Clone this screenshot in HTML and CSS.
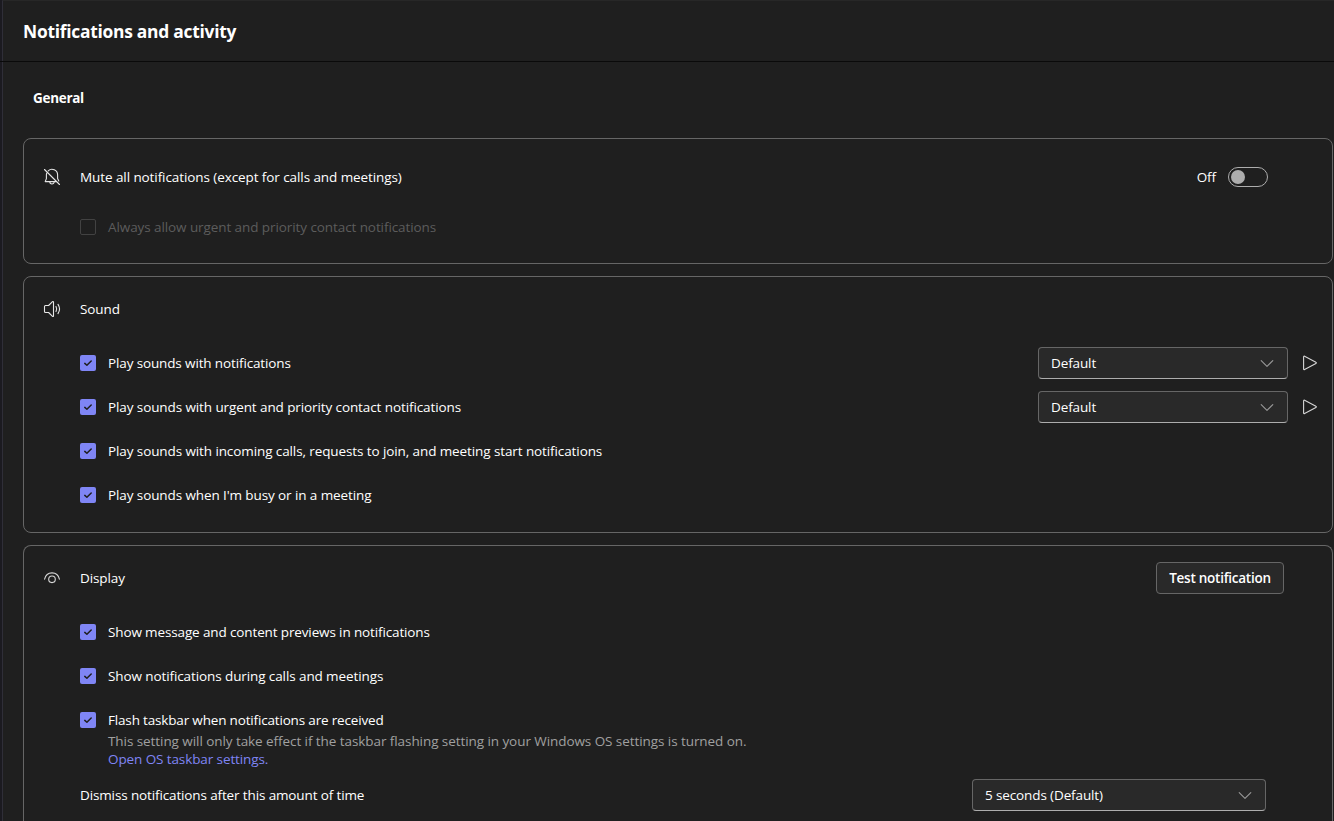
FILE: index.html
```html
<!DOCTYPE html>
<html lang="en">
<head>
<meta charset="utf-8">
<title>Notifications and activity</title>
<link rel="stylesheet" href="styles.css">
</head>
<body>
<svg class="defs" width="0" height="0" aria-hidden="true">
  <symbol id="check" viewBox="0 0 16 16"><path d="M4.8 8.4 6.9 10.3 11.2 6" fill="none" stroke="#1f1f1f" stroke-width="1.5" stroke-linecap="round" stroke-linejoin="round"/></symbol>
  <symbol id="chevron" viewBox="0 0 14 14"><path d="M1.2 4.6 7 10.4 12.8 4.6" fill="none" stroke="#999" stroke-width="1.1" stroke-linecap="round" stroke-linejoin="round"/></symbol>
  <symbol id="play" viewBox="0 0 16 16"><path d="M1.6 1.9c0-.6.5-.9 1-.7l11.3 6c.6.3.6 1 0 1.3l-11.3 6c-.5.3-1 0-1-.6z" fill="none" stroke="#d6d6d6" stroke-width="1.1" stroke-linejoin="round"/></symbol>
</svg>
<div class="pane">
  <header class="header"><h1 class="title">Notifications and activity</h1></header>
  <main class="content">
    <h2 class="section">General</h2>

    <section class="card mute">
      <div class="row head">
        <svg class="icon" viewBox="0 0 20 20" fill="none" stroke="#e6e6e6" stroke-width="1.1" stroke-linecap="round" stroke-linejoin="round"><path d="M2.5 2.5 17.5 17.5M6.2 3.8A5.6 5.6 0 0 1 15.6 8v3.6l1.2 2.4M4.7 6.2A6 6 0 0 0 4.4 8v3.6L3.2 14.6h11.4M7.8 14.8a2.2 2.2 0 0 0 4.4 0"/></svg>
        <span class="label">Mute all notifications (except for calls and meetings)</span>
        <span class="state">Off</span><span class="switch"><span class="knob"></span></span>
      </div>
      <div class="row option disabled"><span class="box"></span><span class="label">Always allow urgent and priority contact notifications</span></div>
    </section>

    <section class="card sound">
      <div class="row head">
        <svg class="icon" viewBox="0 0 20 20" fill="none" stroke="#e6e6e6" stroke-width="1.1" stroke-linecap="round" stroke-linejoin="round"><path d="M11.5 3.1v13.8c0 .6-.6.8-1 .4L6.6 13.5H3.5a1 1 0 0 1-1-1v-5a1 1 0 0 1 1-1h3.1l3.9-3.8c.4-.4 1-.2 1 .4zM14 7.6a5 5 0 0 1 0 4.8M16 5.4a8.2 8.2 0 0 1 0 9.2"/></svg>
        <span class="label">Sound</span>
      </div>
      <div class="options">
        <div class="row option"><svg class="box on"><use href="#check"/></svg><span class="label tight">Play sounds with notifications</span>
          <span class="select">Default<svg class="chevron"><use href="#chevron"/></svg></span><svg class="play"><use href="#play"/></svg></div>
        <div class="row option"><svg class="box on"><use href="#check"/></svg><span class="label">Play sounds with urgent and priority contact notifications</span>
          <span class="select">Default<svg class="chevron"><use href="#chevron"/></svg></span><svg class="play"><use href="#play"/></svg></div>
        <div class="row option"><svg class="box on"><use href="#check"/></svg><span class="label">Play sounds with incoming calls, requests to join, and meeting start notifications</span></div>
        <div class="row option"><svg class="box on"><use href="#check"/></svg><span class="label">Play sounds when I'm busy or in a meeting</span></div>
      </div>
    </section>

    <section class="card display">
      <div class="row head">
        <svg class="icon" viewBox="0 0 20 20" fill="none" stroke="#d6d6d6" stroke-width="1.1" stroke-linecap="round"><path d="M2.6 11.2C3.5 7.2 6.4 4.9 10 4.9s6.5 2.3 7.4 6.3"/><circle cx="10" cy="11.3" r="3.3"/></svg>
        <span class="label">Display</span>
        <button class="button" type="button">Test notification</button>
      </div>
      <div class="options">
        <div class="row option"><svg class="box on"><use href="#check"/></svg><span class="label tight">Show message and content previews in notifications</span></div>
        <div class="row option"><svg class="box on"><use href="#check"/></svg><span class="label">Show notifications during calls and meetings</span></div>
        <div class="row option"><svg class="box on"><use href="#check"/></svg><span class="label tighter">Flash taskbar when notifications are received</span></div>
      </div>
      <div class="help">
        <div>This setting will only take effect if the taskbar flashing setting in your Windows OS settings is turned on.</div>
        <div><a class="link">Open OS taskbar settings.</a></div>
      </div>
      <div class="row dismiss"><span class="label tight">Dismiss notifications after this amount of time</span>
        <span class="select wide">5 seconds (Default)<svg class="chevron"><use href="#chevron"/></svg></span></div>
    </section>
  </main>
</div>
</body>
</html>
```
FILE: styles.css
```css
* { box-sizing: border-box; }
body {
  margin: 0;
  height: 821px;
  overflow: hidden;
  background: #1b1a20;
  color: #fff;
  font: 13.5px/20px "Open Sans", "Noto Sans", sans-serif;
  letter-spacing: -0.1px;
  white-space: nowrap;
}
.defs { display: block; height: 0; }
.pane { margin-left: 2px; border-left: 1px solid #2f2e38; border-top: 1px solid #272727; height: 821px; background: #1f1f1f; }
.header { display: flex; align-items: center; height: 61px; margin-left: -3px; padding-left: 23px; border-bottom: 1px solid #0a0a0a; }
.title { margin: 0; font-size: 17.4px; font-weight: 700; letter-spacing: -0.26px; }
.content { padding: 26px 1px 0 20px; }
.section { margin: 0 0 30px 10px; font-size: 13.5px; line-height: 20px; font-weight: 700; letter-spacing: -0.3px; }
.card { border: 1px solid #666; border-radius: 8px; margin-bottom: 12px; padding-left: 18px; }
.mute { padding-top: 22px; padding-bottom: 20px; }
.mute .option { margin-top: 18px; }
.mute .label { letter-spacing: -0.085px; }
.sound { padding-top: 16px; padding-bottom: 21px; }
/* The last card continues to the bottom edge of the pane. */
.display { padding-top: 16px; height: 276px; margin-bottom: 0; border-bottom: 0; border-radius: 8px 8px 0 0; }
.row { display: flex; align-items: center; height: 32px; }
.icon { width: 20px; height: 20px; margin-right: 18px; flex: none; }
.option { padding-left: 38px; }
.options { display: flex; flex-direction: column; gap: 12px; margin-top: 22px; }
.box { width: 16px; height: 16px; margin-right: 12px; border: 1px solid #424242; border-radius: 2px; flex: none; }
.box.on { border: 0; background: #7f85f5; }
.label { flex: 1; }
.tight { letter-spacing: -0.13px; }
.tighter { letter-spacing: -0.17px; }
.disabled .label { color: #5c5c5c; }
.state { margin-right: 12px; }
.switch { width: 40px; height: 20px; margin-right: 64px; padding: 2px; border: 1px solid #adadad; border-radius: 10px; }
.knob { display: block; width: 14px; height: 14px; border-radius: 50%; background: #adadad; }
.select {
  display: flex; align-items: center; justify-content: space-between;
  width: 250px; height: 32px; padding: 0 13px 0 12px;
  border: 1px solid #666; border-bottom-color: #adadad; border-radius: 4px; background: #292929;
  letter-spacing: -0.12px;
}
.chevron { width: 14px; height: 14px; }
.play { width: 16px; height: 16px; margin: 0 14px 0 14px; }
.button {
  width: 128px; height: 32px; margin-right: 48px; padding: 0;
  border: 1px solid #666; border-radius: 4px; background: #292929; color: #fff;
  font: 600 13.5px/20px "Open Sans", "Noto Sans", sans-serif; letter-spacing: -0.25px;
}
.help { margin: -4px 0 11px 66px; line-height: 18px; color: #a0a0a0; letter-spacing: -0.07px; }
.link { color: #7f85f5; letter-spacing: -0.1px; }
.dismiss { padding-left: 38px; }
.wide { width: 294px; margin-right: 66px; }
```
